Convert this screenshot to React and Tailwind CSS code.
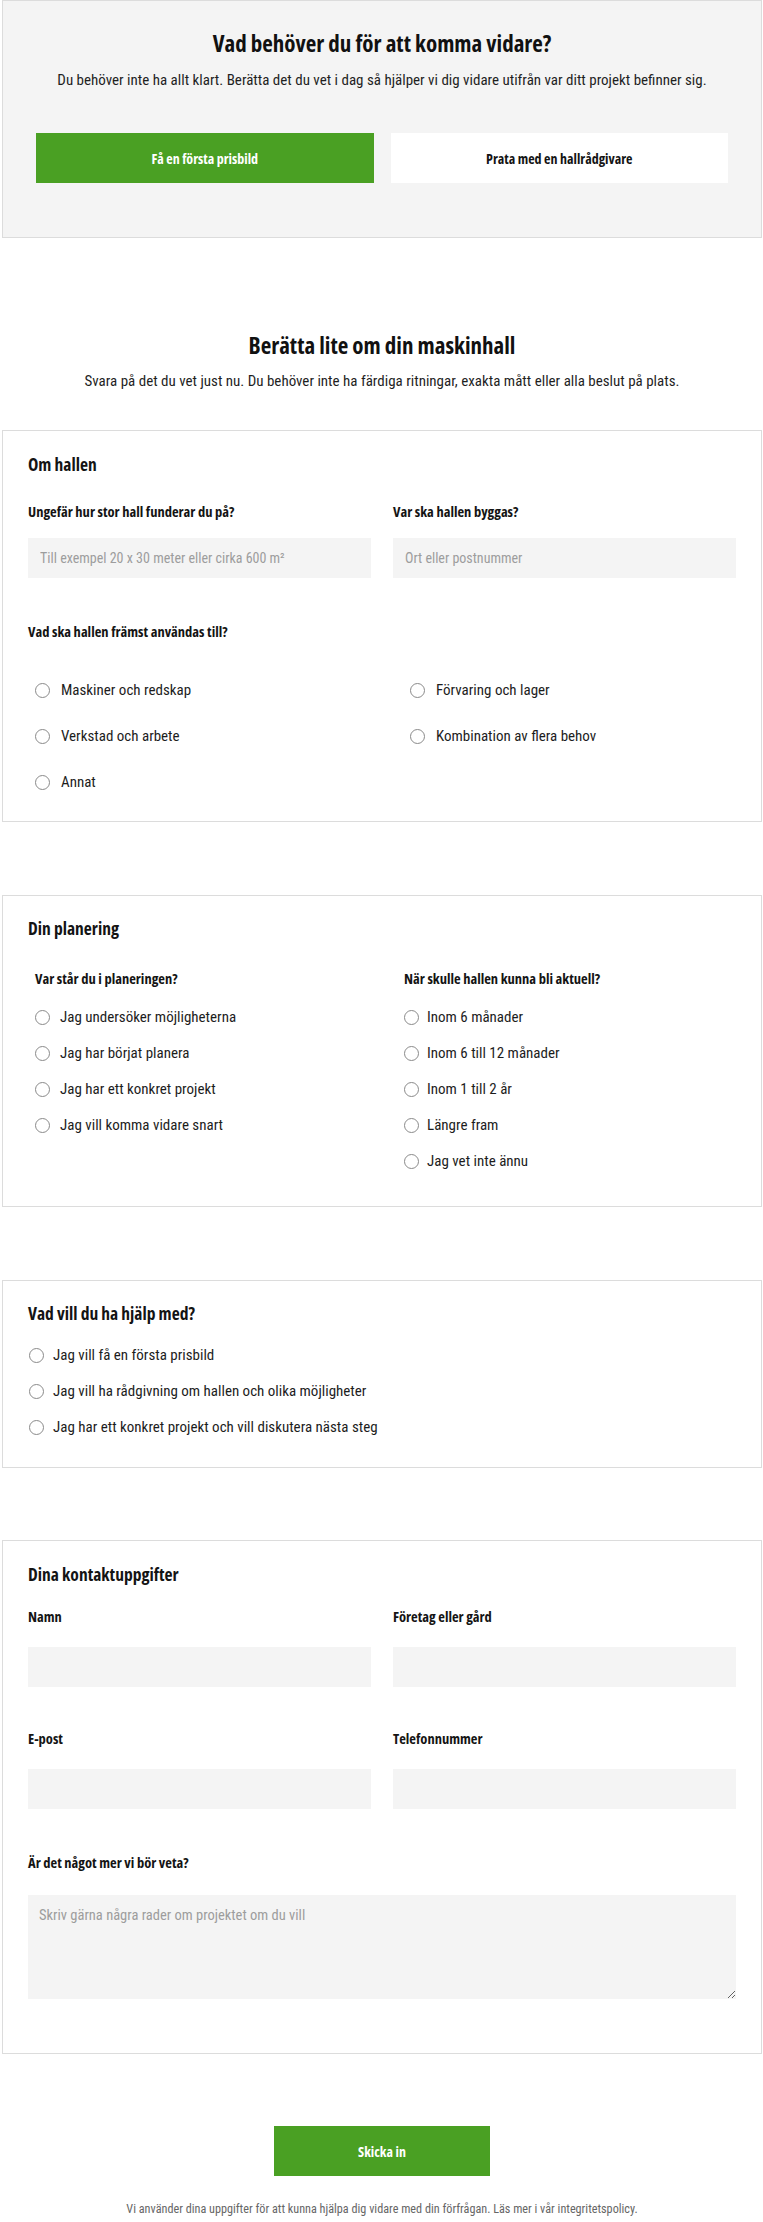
import { useState } from 'react';

// Feta texter: Open Sans i smal bredd, brödtext: Roboto Condensed
const BOLD = "font-['Open_Sans',sans-serif] [font-stretch:75%] font-bold";

function Radio({ name, label, checked, onChange, gap = 'gap-[11px]' }) {
  return (
    <label className={`flex items-center ${gap} h-[22px] cursor-pointer`}>
      <input
        type="radio"
        name={name}
        checked={checked}
        onChange={onChange}
        className="appearance-none w-[15px] h-[15px] shrink-0 rounded-full border border-[#8a8a8a] bg-white checked:border-[5px] checked:border-[#4aa023]"
      />
      <span className="text-[15px] leading-[22px] text-[#1d1d1d]">{label}</span>
    </label>
  );
}

function Card({ title, className = '', children }) {
  return (
    <section className={`border border-[#dcdcdc] bg-white px-[25px] ${className}`}>
      <h3 className={`${BOLD} text-[17.5px] leading-[24px] text-[#141414]`}>{title}</h3>
      {children}
    </section>
  );
}

function Label({ children, className = '' }) {
  return <p className={`${BOLD} text-[14.5px] leading-[18px] text-[#141414] ${className}`}>{children}</p>;
}

function TextInput({ placeholder = '' }) {
  return (
    <input
      type="text"
      placeholder={placeholder}
      className="w-full h-[40px] bg-[#f4f4f4] px-[12px] text-[14px] text-[#222] placeholder:text-[#9d9d9d] outline-none"
    />
  );
}

const anvandning = [
  'Maskiner och redskap',
  'Förvaring och lager',
  'Verkstad och arbete',
  'Kombination av flera behov',
  'Annat',
];

const planering = [
  'Jag undersöker möjligheterna',
  'Jag har börjat planera',
  'Jag har ett konkret projekt',
  'Jag vill komma vidare snart',
];

const tidpunkt = ['Inom 6 månader', 'Inom 6 till 12 månader', 'Inom 1 till 2 år', 'Längre fram', 'Jag vet inte ännu'];

const hjalp = [
  'Jag vill få en första prisbild',
  'Jag vill ha rådgivning om hallen och olika möjligheter',
  'Jag har ett konkret projekt och vill diskutera nästa steg',
];

export default function App() {
  const [val, setVal] = useState({});
  const pick = (grupp, v) => setVal((s) => ({ ...s, [grupp]: v }));

  return (
    <div className="min-h-screen bg-white font-['Roboto_Condensed','Liberation_Sans',sans-serif] text-[#1d1d1d] pl-[2px] pr-px pb-[4px]">
      {/* Intro med knappar */}
      <div className="border border-[#dcdcdc] bg-[#f4f4f4] pt-[28px] pb-[54px] px-[33px] text-center">
        <h2 className={`${BOLD} text-[23px] leading-[28px] text-[#111]`}>Vad behöver du för att komma vidare?</h2>
        <p className="mt-[13px] text-[15px] leading-[20px] text-[#1f1f1f]">
          Du behöver inte ha allt klart. Berätta det du vet i dag så hjälper vi dig vidare utifrån var ditt projekt befinner sig.
        </p>
        <div className="mt-[43px] grid grid-cols-2 gap-[17px]">
          <button className={`${BOLD} h-[50px] bg-[#4aa023] text-white text-[14px]`}>Få en första prisbild</button>
          <button className={`${BOLD} h-[50px] bg-white text-[#141414] text-[14px]`}>Prata med en hallrådgivare</button>
        </div>
      </div>

      <div className="mt-[93px] text-center">
        <h2 className={`${BOLD} text-[23px] leading-[28px] text-[#111]`}>Berätta lite om din maskinhall</h2>
        <p className="mt-[12px] text-[15px] leading-[20px] text-[#1f1f1f]">
          Svara på det du vet just nu. Du behöver inte ha färdiga ritningar, exakta mått eller alla beslut på plats.
        </p>
      </div>

      {/* Om hallen */}
      <Card title="Om hallen" className="mt-[39px] pt-[21px] pb-[28px]">
        <div className="mt-[27px] grid grid-cols-2 gap-x-[22px]">
          <div>
            <Label>Ungefär hur stor hall funderar du på?</Label>
            <div className="mt-[17px]">
              <TextInput placeholder="Till exempel 20 x 30 meter eller cirka 600 m²" />
            </div>
          </div>
          <div>
            <Label>Var ska hallen byggas?</Label>
            <div className="mt-[17px]">
              <TextInput placeholder="Ort eller postnummer" />
            </div>
          </div>
        </div>
        <Label className="mt-[45px]">Vad ska hallen främst användas till?</Label>
        <div className="mt-[38px] pl-[7px] grid grid-cols-[375px_1fr] gap-y-[24px]">
          {anvandning.map((a) => (
            <Radio key={a} name="anvandning" label={a} checked={val.anvandning === a} onChange={() => pick('anvandning', a)} />
          ))}
        </div>
      </Card>

      {/* Din planering */}
      <Card title="Din planering" className="mt-[73px] pt-[20px] pb-[34px]">
        <div className="mt-[30px] pl-[7px] grid grid-cols-[369px_1fr]">
          <div>
            <Label>Var står du i planeringen?</Label>
            <div className="mt-[18px] flex flex-col gap-[14px]">
              {planering.map((p) => (
                <Radio key={p} name="planering" label={p} gap="gap-[10px]" checked={val.planering === p} onChange={() => pick('planering', p)} />
              ))}
            </div>
          </div>
          <div>
            <Label>När skulle hallen kunna bli aktuell?</Label>
            <div className="mt-[18px] flex flex-col gap-[14px]">
              {tidpunkt.map((t) => (
                <Radio key={t} name="tidpunkt" label={t} gap="gap-[8px]" checked={val.tidpunkt === t} onChange={() => pick('tidpunkt', t)} />
              ))}
            </div>
          </div>
        </div>
      </Card>

      {/* Vad vill du ha hjälp med */}
      <Card title="Vad vill du ha hjälp med?" className="mt-[73px] pt-[20px] pb-[29px]">
        <div className="mt-[19px] pl-px flex flex-col gap-[14px]">
          {hjalp.map((h) => (
            <Radio key={h} name="hjalp" label={h} gap="gap-[9px]" checked={val.hjalp === h} onChange={() => pick('hjalp', h)} />
          ))}
        </div>
      </Card>

      {/* Kontaktuppgifter */}
      <Card title="Dina kontaktuppgifter" className="mt-[72px] pt-[21px] pb-[54px]">
        <div className="mt-[22px] grid grid-cols-2 gap-x-[22px] gap-y-[43px]">
          <div>
            <Label>Namn</Label>
            <div className="mt-[21px]"><TextInput /></div>
          </div>
          <div>
            <Label>Företag eller gård</Label>
            <div className="mt-[21px]"><TextInput /></div>
          </div>
          <div>
            <Label>E-post</Label>
            <div className="mt-[21px]"><TextInput /></div>
          </div>
          <div>
            <Label>Telefonnummer</Label>
            <div className="mt-[21px]"><TextInput /></div>
          </div>
        </div>
        <Label className="mt-[45px]">Är det något mer vi bör veta?</Label>
        <textarea
          placeholder="Skriv gärna några rader om projektet om du vill"
          className="mt-[23px] block w-full h-[104px] bg-[#f4f4f4] px-[11px] py-[10px] text-[14.5px] leading-[22px] placeholder:text-[#9d9d9d] outline-none"
        />
      </Card>

      <div className="mt-[72px] flex justify-center">
        <button className={`${BOLD} w-[216px] h-[50px] bg-[#4aa023] text-white text-[14px]`}>Skicka in</button>
      </div>
      <p className="mt-[25px] text-center text-[12.2px] leading-[16px] text-[#666]">
        Vi använder dina uppgifter för att kunna hjälpa dig vidare med din förfrågan. Läs mer i vår integritetspolicy.
      </p>
    </div>
  );
}
